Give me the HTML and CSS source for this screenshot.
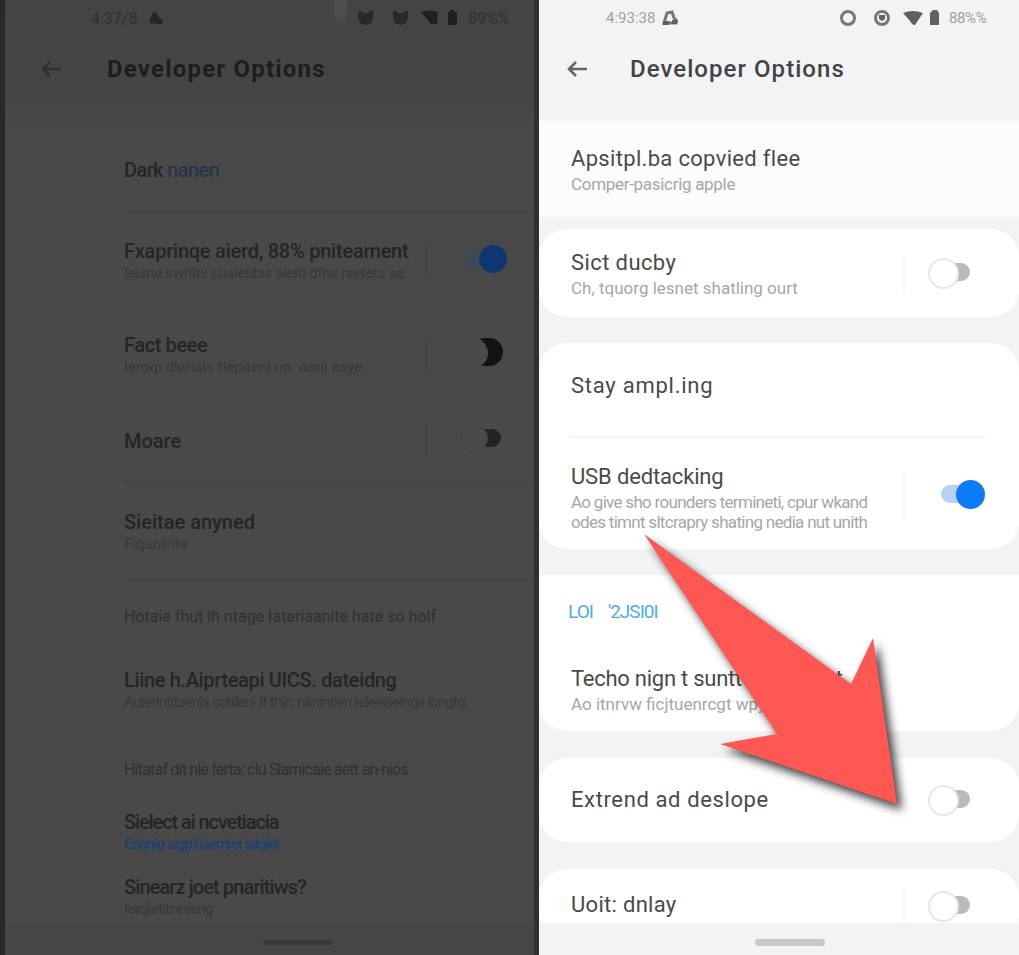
FILE: index.html
```
<!DOCTYPE html>
<html lang="en">
<head>
<meta charset="utf-8">
<title>Developer Options</title>
<link rel="stylesheet" href="styles.css">
</head>
<body>
<div class="stage">
  <section class="phone dim">
    <i class="glint"></i>
    <div class="status">
      <span class="clock">4:37/8</span>
      <svg class="bell" width="16" height="16" viewBox="0 0 16 16"><path d="M1 13 5 2l4 1 2 5 4 2-1 4z"/></svg>
      <svg class="tray" width="102" height="20" viewBox="0 0 102 20"><path d="M2 3h3l2 2h5l2-2h3v6q0 7-7.500 8Q2 16 2 9zM37 3h3l2 2h5l2-2h3v6q0 7-7.500 8Q37 16 37 9z"/><path d="M65 4q10-3 17 0l-1 12h-6z" class="dark"/><path d="M92 4h2V2h4v2h3v13h-9z" class="dark"/></svg>
      <span class="pct">89%%</span>
    </div>
    <header class="bar">
      <svg width="24" height="20" viewBox="0 0 24 20"><path d="M10 3 3 10l7 7M3 10h18"/></svg>
      <h1>Developer Options</h1>
    </header>
    <main class="list">
      <div class="row r84 line"><div class="copy"><b class="t l1">Dark <em>nanen</em></b></div></div>
      <div class="row r98"><div class="copy"><b class="t l2">Fxaprinqe aierd, 88% pniteament</b><span class="s l3">Ieisne swritei sualetibis alelti dfns rsetets se.</span></div><i class="sep"></i><i class="switch on"></i></div>
      <div class="row r90"><div class="copy"><b class="t l4">Fact beee</b><span class="s l5">Ieroqi dlerials tlepiteni on: oarii eaye</span></div><i class="sep"></i><i class="switch heavy"></i></div>
      <div class="row r82 line"><div class="copy"><b class="t l6">Moare</b></div><i class="sep"></i><i class="switch"></i></div>
      <div class="row r100 line"><div class="copy"><b class="t l7">Sieitae anyned</b><span class="s l8">Fiqaotrite</span></div></div>
      <div class="row r70"><span class="s cap l9">Hotaie fhut lh ntage Iateriaanite hate so holf</span></div>
      <div class="row r76"><div class="copy"><b class="t l10">Liine h.Aiprteapi UICS. dateidng</b><span class="s l11">Auterintitaenis sottleni ft thin: nitnintien teleeiseinge iqngtg.</span></div></div>
      <div class="row r84"><span class="s cap l12">Hitataf dit nle ferta: clu Slarnicaie aett an-nios</span></div>
      <div class="row r40"><div class="copy"><b class="t l13">Sielect ai ncvetiacia</b><span class="s link l14">Erianig aigp i'iaerniet ialgiet</span></div></div>
      <div class="row r90"><div class="copy"><b class="t l15">Sinearz joet pnaritiws?</b><span class="s l16">Ieiqlietitninieng</span></div></div>
    </main>
    <footer class="nav"><i></i></footer>
  </section>

  <section class="phone lit">
    <div class="status">
      <span class="clock">4:93:38</span>
      <svg class="bell" width="16" height="16" viewBox="0 0 16 16"><path d="M2 13 5 3l5-1 2 6 3 3-1 2z" class="ring"/><path d="M1 11h6v4H1zM10 10h5v4h-5z"/></svg>
      <svg class="tray" width="104" height="20" viewBox="0 0 104 20"><circle cx="9" cy="10" r="6.500" class="ring"/><circle cx="43" cy="10" r="6.500" class="ring"/><path d="M40 7h6v4l-3 2-3-2z"/><path d="M64 5q10-4 20 0l-8 12q-3 0-5-4z"/><path d="M91 5l3-3h4l2 3v12h-9z"/></svg>
      <span class="pct">88%%</span>
    </div>
    <header class="bar">
      <svg width="24" height="20" viewBox="0 0 24 20"><path d="M10 3 3 10l7 7M3 10h18"/></svg>
      <h1>Developer Options</h1>
    </header>
    <main class="cards">
      <div class="card first"><div class="row"><div class="copy"><b class="t c1">Apsitpl.ba copvied flee</b><span class="s c2">Comper-pasicrig apple</span></div></div></div>
      <div class="card second"><div class="row r88"><div class="copy"><b class="t c3">Sict ducby</b><span class="s c4">Ch, tquorg lesnet shatling ourt</span></div><i class="sep"></i><i class="switch"></i></div></div>
      <div class="card third">
        <div class="row r86"><div class="copy"><b class="t c5">Stay ampl.ing</b></div></div>
        <hr>
        <div class="row r104"><div class="copy"><b class="t c6">USB dedtacking</b><span class="s c7">Ao give sho rounders termineti, cpur wkand</span><span class="s c8">odes timnt sltcrapry shating nedia nut unith</span></div><i class="sep tall"></i><i class="switch on"></i></div>
      </div>
      <div class="card fourth">
        <div class="group"><span>LOI</span><span>'2JSI0I</span></div>
        <div class="row r84"><div class="copy"><b class="t c9">Techo nign t suntterg aprortt</b><span class="s c10">Ao itnrvw ficjtuenrcgt wpyweint</span></div></div>
      </div>
      <div class="card fifth"><div class="row r84"><div class="copy"><b class="t c11">Extrend ad deslope</b></div><i class="switch"></i></div></div>
      <div class="card sixth"><div class="row r72"><div class="copy"><b class="t c12">Uoit: dnlay</b></div><i class="sep"></i><i class="switch low"></i></div></div>
    </main>
    <footer class="nav"><i></i></footer>
  </section>
  <svg class="arrow" width="300" height="310" viewBox="0 0 300 310"><path d="M3 3 210 153 232 107 256 273 79 213 136 203Z"/></svg>
</div>
</body>
</html>
```
FILE: styles.css
```
* { box-sizing: border-box; }
body { margin: 0; font-family: Roboto, sans-serif; overflow: hidden; }
.stage { position: relative; display: flex; width: 1019px; height: 955px; background: #323232; }
.phone { position: relative; display: flex; flex-direction: column; height: 955px; }
.dim { width: 539px; background: linear-gradient(#444 0, #464545 100px, #494949 130px); border-left: 5px solid #292929; border-right: 5px solid #303030; }
.lit { width: 480px; background: #f3f3f6; }

.status { display: flex; align-items: center; height: 36px; font-size: 16px; }
.clock { width: 47px; white-space: nowrap; }
.bell { margin-left: 10px; }
.tray { margin-left: auto; }
.pct { width: 40px; margin-left: 6px; white-space: nowrap; }
.dim .status { padding: 0 26px 0 86px; color: #303030; fill: #28292c; }
.dim .pct { margin-left: 10px; }
.dim .dark { fill: #202020; }
.dim .bell { fill: #252525; }
.lit .status { padding: 0 30px 0 67px; color: #a0a0a3; fill: #606062; }
.ring { fill: none; stroke: #77777a; stroke-width: 3; }
.lit .bell { margin-left: 9px; }
.lit .clock { font-size: 15px; }
.lit .pct { font-size: 15px; letter-spacing: -.4px; }

.bar { display: flex; align-items: center; height: 66px; flex: none; }
.bar svg { fill: none; stroke-width: 2.600; }
.bar h1 { margin: 0; font-size: 24px; font-weight: 500; line-height: 30px; white-space: nowrap; }
.dim .bar { padding-left: 35px; }
.dim .bar svg { stroke: #303030; }
.dim .bar h1 { margin-left: 43px; color: #1d1d1d; letter-spacing: 1.2px; font-weight: 700; }
.lit .bar { padding-left: 27px; }
.lit .bar svg { stroke: #666; }
.lit .bar h1 { margin-left: 40px; color: #424444; letter-spacing: 1.05px; }

.list { flex: 1; min-height: 0; margin-top: 26px; overflow: hidden; }
.row { display: flex; align-items: center; flex: none; }
.dim .row { padding-left: 119px; }
.line { background: linear-gradient(#454545, #454545) 119px 100% / 410px 2px no-repeat; }
.r40 { height: 40px; }
.r70 { height: 70px; }
.r72 { height: 72px; }
.r76 { height: 76px; }
.r82 { height: 82px; }
.r84 { height: 84px; }
.r86 { height: 86px; }
.r88 { height: 88px; }
.r90 { height: 90px; }
.r98 { height: 98px; }
.r100 { height: 100px; }
.r104 { height: 104px; }

.copy { display: flex; flex-direction: column; flex: 1; min-width: 0; }
.t, .s { display: block; white-space: nowrap; }
.t em { font-style: normal; color: #2c3346; }
.dim .t { font-size: 20px; line-height: 24px; font-weight: 500; color: #252525; }
.dim .s { font-size: 15px; line-height: 20px; color: #383838; }
.dim .cap { font-size: 16px; color: #303030; }
.dim .link { color: #213f70; font-weight: 500; }
.lit .t { font-size: 22px; line-height: 30px; font-weight: 400; color: #484a4a; }
.lit .s { font-size: 17px; line-height: 20px; color: #a5a7a7; }

.l1 { letter-spacing: -.6px; }
.l2 { letter-spacing: -.23px; }
.l3 { letter-spacing: -.3px; }
.l4 { letter-spacing: -.4px; }
.l10 { letter-spacing: -.35px; }
.l11 { letter-spacing: -.8px; }
.l12 { letter-spacing: -.8px; }
.l13 { letter-spacing: -1.1px; }
.l14 { letter-spacing: -.95px; }
.l15 { letter-spacing: -.9px; }
.l16 { letter-spacing: -.75px; }
.c1 { letter-spacing: .32px; }
.c2 { letter-spacing: -.3px; }
.c3 { letter-spacing: .4px; }
.c5 { letter-spacing: .75px; }
.c6 { letter-spacing: -.15px; }
.c7, .c8 { letter-spacing: -.7px; }
.c9 { letter-spacing: -.25px; }
.c11 { letter-spacing: .62px; }
.c12 { letter-spacing: .3px; }

.sep { flex: none; width: 2px; height: 34px; background: #424242; margin-right: 34px; }
.switch { position: relative; flex: none; width: 44px; height: 28px; margin-right: 29px; }
.switch::before { content: ""; position: absolute; left: 14px; top: 5px; width: 26px; height: 18px; border-radius: 9px; background: #242424; }
.switch::after { content: ""; position: absolute; left: 0; top: 2px; width: 25px; height: 25px; border-radius: 50%; background: #4a4a4a; }
.dim .switch { top: -3px; }
.dim .on { top: 0; }
.dim .switch:not(.on)::after { top: 1px; border: 1px solid #444; }
.dim .heavy::before { left: 10px; top: 0; width: 32px; height: 28px; border-radius: 14px; background: #121212; }
.dim .heavy:not(.on)::after { left: -2px; top: 0; width: 27px; height: 28px; border-color: #4a4a4a; }
.dim .on::before { left: 4px; width: 18px; background: #414853; }
.dim .on::after { left: 18px; top: -2px; width: 28px; height: 28px; background: #0e366f; }

.cards { flex: 1; min-height: 0; overflow: hidden; padding-top: 19px; }
.card { background: #fff; border-radius: 28px; padding-left: 32px; }
.first { height: 96px; margin-bottom: 12px; border-radius: 0; background: #fcfcfc; }
.first .row { height: 96px; }
.second, .third { margin-bottom: 26px; }
.fourth { border-radius: 0 0 28px 28px; margin-bottom: 27px; }
.fifth { margin-bottom: 27px; }
.card hr { height: 2px; margin: 7px 34px 7px 0; border: 0; background: #f4f4f4; }
.group { display: flex; align-items: center; gap: 15px; height: 72px; margin-left: -3px; font-size: 19px; letter-spacing: -1px; color: #4fabf2; }
.lit .sep { background: #f4f4f5; margin-right: 22px; }
.lit .tall { height: 48px; }
.lit .switch { margin-right: 48px; }
.lit .switch::before { left: 16px; top: 4px; width: 27px; height: 18px; background: #b8babb; }
.lit .switch::after { left: 1px; top: -1px; width: 27px; height: 27px; background: #fff; border: 2px solid #e6e7e7; }
.lit .low { top: 1px; }
.lit .on::before { left: 14px; width: 24px; top: 2px; background: #b8d0f5; }
.lit .on::after { left: 29px; top: -3px; width: 29px; height: 29px; border: 0; background: #0d7af8; }

.nav { display: flex; align-items: center; justify-content: center; flex: none; height: 32px; padding-top: 7px; }
.nav i { height: 7px; width: 70px; border-radius: 3px; }
.dim .nav { background: #464646; padding-left: 56px; }
.dim .nav i { background: #393939; height: 5px; }
.lit .nav { background: #f3f3f3; padding-left: 22px; }
.lit .nav i { background: #c9c9ca; }

.glint { position: absolute; left: 329px; top: 0; width: 13px; height: 22px; background: linear-gradient(#505050, #4a4a4a); border-radius: 0 0 5px 5px; }
.arrow { position: absolute; left: 641px; top: 531px; overflow: visible; fill: #ff5752; filter: drop-shadow(5px 6px 5px rgba(0, 0, 0, .75)); }
```
